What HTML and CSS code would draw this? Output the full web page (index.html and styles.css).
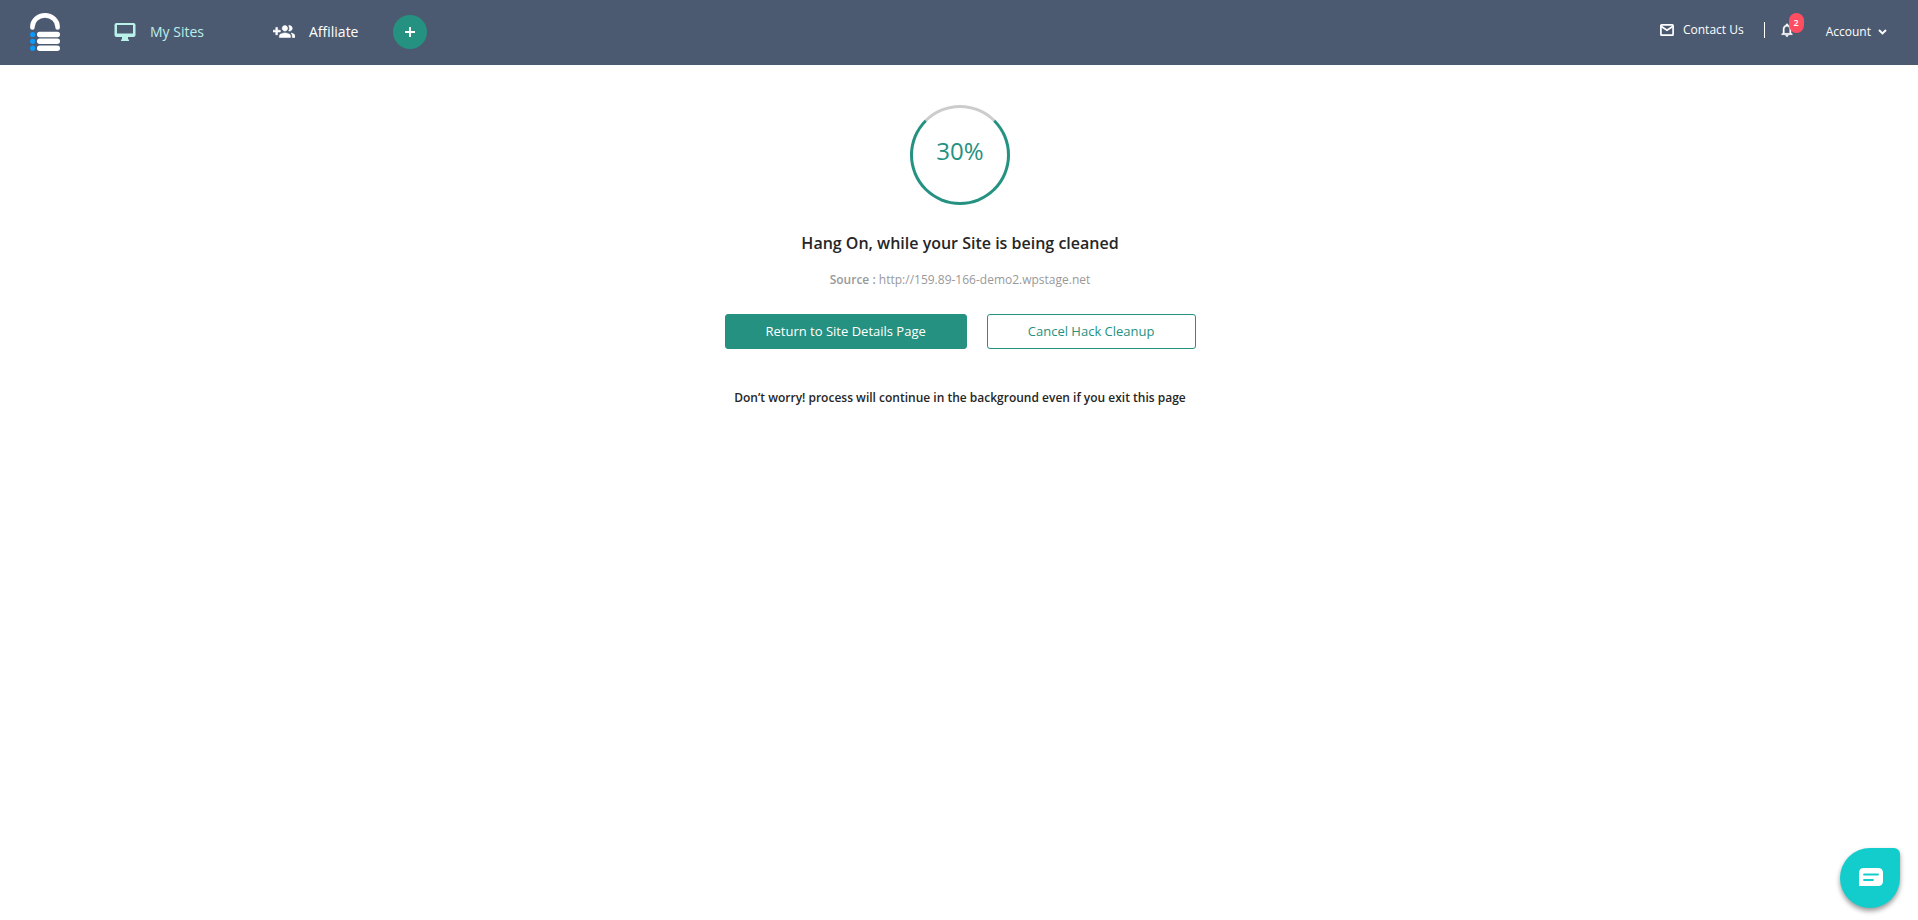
FILE: index.html
```html
<!DOCTYPE html>
<html lang="en">
<head>
    <meta charset="UTF-8">
    <title>Hack Cleanup</title>
    <link rel="stylesheet" href="styles.css">
</head>
<body>
<header class="header">
    <a href="#" class="logo" aria-label="Home">
        <svg width="30" height="38" viewBox="0 0 30 38">
            <path d="M2.4 14.5V14a12.6 11.6 0 0 1 25.2 0v.5" fill="none" stroke="#fff" stroke-width="4.6" stroke-linecap="round"/>
            <g fill="#0d99f9">
                <circle cx="2.7" cy="21.5" r="2.6"/>
                <circle cx="2.7" cy="28.3" r="2.6"/>
                <circle cx="2.7" cy="35.2" r="2.6"/>
            </g>
            <g fill="#fff">
                <rect x="7" y="18.8" width="23" height="5.4" rx="2.7"/>
                <rect x="7" y="25.6" width="23" height="5.4" rx="2.7"/>
                <rect x="7" y="32.5" width="23" height="5.4" rx="2.7"/>
            </g>
        </svg>
    </a>
    <nav class="nav">
        <a href="#" class="active">
            <svg width="22" height="20" viewBox="0 0 22 20" fill="currentColor"><path fill-rule="evenodd" d="M2.500 1h17a2 2 0 0 1 2 2v10a2 2 0 0 1-2 2H14v2l1 1v1H7v-1l1-1v-2H2.500a2 2 0 0 1-2-2V3a2 2 0 0 1 2-2zM3 3v8.500h16V3z"/></svg>
            My Sites
        </a>
        <a href="#">
            <svg width="22" height="22" viewBox="0 0 24 24" fill="currentColor"><path d="M8 10H5V7H3v3H0v2h3v3h2v-3h3v-2zm10 1c1.660 0 2.990-1.340 2.990-3S19.660 5 18 5c-.32 0-.63.050-.91.140.57.810.9 1.790.9 2.860s-.34 2.040-.9 2.860c.28.090.59.140.91.140zm-5 0c1.660 0 2.990-1.340 2.990-3S14.660 5 13 5c-1.660 0-3 1.340-3 3s1.340 3 3 3zm6.620 2.160c.83.730 1.380 1.660 1.380 2.840v2h3v-2c0-1.540-2.370-2.490-4.380-2.840zM13 13c-2 0-6 1-6 3v2h12v-2c0-2-4-3-6-3z" stroke="currentColor" stroke-width=".6"/></svg>
            Affiliate
        </a>
    </nav>
    <button type="button" class="add" aria-label="Add site">
        <svg width="10" height="10" viewBox="0 0 10 10"><path d="M5 0v10M0 5h10" stroke="#fff" stroke-width="1.800"/></svg>
    </button>
    <div class="tools">
        <div class="links">
            <a href="#" class="contact">
                <svg width="14" height="12" viewBox="0 0 14 12" fill="none" stroke="#fff" stroke-width="1.700"><rect x=".9" y=".9" width="12.200" height="10.200" rx=".7"/><path d="M1 2.200l6 4 6-4"/></svg>
                Contact Us
            </a>
            <button type="button" class="bell" aria-label="Notifications">
                <svg width="16" height="16" viewBox="0 0 24 24" fill="#fff"><path d="M12 22c1.100 0 2-.9 2-2h-4c0 1.100.9 2 2 2zm6-6v-5c0-3.070-1.630-5.640-4.500-6.320V4c0-.83-.67-1.500-1.500-1.500s-1.500.67-1.500 1.500v.68C7.640 5.360 6 7.920 6 11v5l-2 2v1h16v-1l-2-2zm-2 1H8v-6c0-2.480 1.510-4.500 4-4.500s4 2.020 4 4.500v6z" stroke="#fff" stroke-width=".6"/></svg>
                <span class="badge">2</span>
            </button>
        </div>
        <button type="button" class="account">
            Account
            <svg width="9" height="6" viewBox="0 0 9 6"><path d="M1 1l3.500 3.500L8 1" fill="none" stroke="#fff" stroke-width="1.900"/></svg>
        </button>
    </div>
</header>

<main class="main">
    <div class="progress">
        <span>30%</span>
    </div>
    <h1>Hang On, while your Site is being cleaned</h1>
    <p class="source"><b>Source :</b> http://159.89-166-demo2.wpstage.net</p>
    <div class="actions">
        <button type="button" class="btn primary">Return to Site Details Page</button>
        <button type="button" class="btn">Cancel Hack Cleanup</button>
    </div>
    <p class="note">Don’t worry! process will continue in the background even if you exit this page</p>
</main>

<button type="button" class="chat" aria-label="Open chat">
    <svg width="24" height="18" viewBox="0 0 24 18">
        <path d="M5 0h14q5 0 5 5v8q0 5-5 5H0V5q0-5 5-5z" fill="#fff"/>
        <path d="M5 6.500h14M5 12h9" stroke="#13cdcd" stroke-width="1.800" stroke-linecap="round"/>
    </svg>
</button>
</body>
</html>
```

FILE: styles.css
```css
*{box-sizing:border-box;}
body,h1,p,button{margin:0;padding:0;}
body,button{font-family:"Open Sans", sans-serif;}
body{background:#fff;color:#262626;}
a{text-decoration:none;}
button{border:0;background:none;cursor:pointer;}
svg{display:block;}

/* header */
.header{
    display:flex;
    align-items:center;
    height:65px;
    padding:0 31px 2px 30px;
    background:#4c5a71;
}
.logo{
    margin-right:54px;
}
.nav{
    display:flex;
    gap:69px;
}
.nav a{
    display:flex;
    align-items:center;
    gap:14px;
    color:#fff;
    font-size:14px;
    line-height:20px;
}
.nav .active{
    color:#b9f0ea;
}
.add{
    display:flex;
    align-items:center;
    justify-content:center;
    width:34px;
    height:34px;
    margin-left:35px;
    border-radius:50%;
    background:#259181;
}
.tools{
    display:flex;
    align-items:center;
    margin-left:auto;
}
.links{
    display:flex;
    align-items:center;
    padding-bottom:3px;
}
.contact{
    display:flex;
    align-items:center;
    gap:9px;
    padding-right:20px;
    color:#fff;
    font-size:12px;
    line-height:16px;
    border-right:1px solid #fff;
}
.bell{
    position:relative;
    margin-left:14px;
}
.badge{
    position:absolute;
    top:-9px;
    left:10px;
    width:15px;
    border-radius:8px;
    background:#ff4d62;
    color:#fff;
    font-size:9px;
    font-weight:600;
    line-height:20px;
    text-align:center;
}
.account{
    display:flex;
    align-items:center;
    gap:7px;
    margin-left:31px;
    color:#fff;
    font-size:12px;
    line-height:16px;
}

/* cleanup status */
.main{
    display:flex;
    flex-direction:column;
    align-items:center;
    padding:40px 15px 40px 17px;
    text-align:center;
}
.progress{
    width:100px;
    height:100px;
    border:3px solid #259181;
    border-top-color:#ccc;
    border-radius:50%;
    color:#259181;
    font-size:24px;
    line-height:86px;
}
h1{
    margin-top:26px;
    font-size:16px;
    font-weight:600;
    line-height:24px;
}
.source{
    margin-top:16px;
    color:#999;
    font-size:12px;
    line-height:18px;
}
.source b{
    font-weight:600;
}
.actions{
    display:flex;
    flex-wrap:wrap;
    justify-content:center;
    gap:20px;
    margin-top:25px;
}
.btn{
    height:35px;
    padding:0 40px 2px;
    border:1px solid #259181;
    border-radius:3px;
    color:#259181;
    font-size:13px;
}
.primary{
    background:#259181;
    color:#fff;
}
.note{
    margin-top:40px;
    font-size:12px;
    font-weight:600;
    line-height:18px;
}

/* chat launcher */
.chat{
    position:fixed;
    right:18px;
    bottom:12px;
    display:flex;
    align-items:center;
    justify-content:center;
    width:60px;
    height:60px;
    padding:0 0 3px 2px;
    border-radius:50% 6px 50% 50%;
    background:#13cdcd;
    box-shadow:0 3px 5px rgba(0,0,0,.4);
}
```
